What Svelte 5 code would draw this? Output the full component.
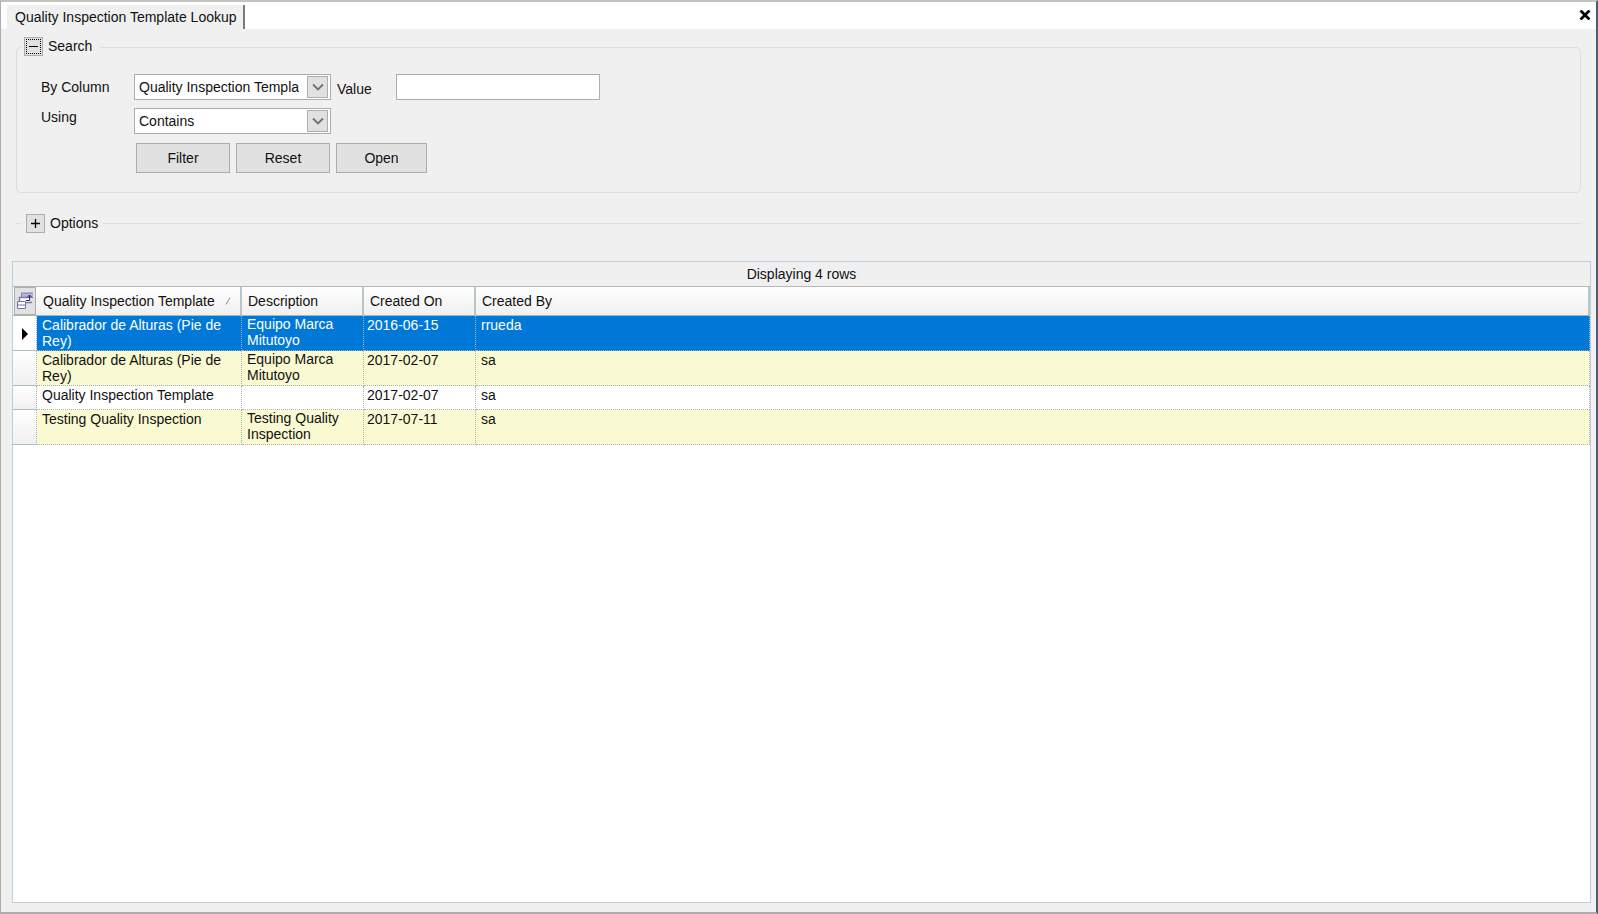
<script lang="ts">
  interface TemplateRow {
    name: string;
    description: string;
    createdOn: string;
    createdBy: string;
  }

  const rows: TemplateRow[] = [
    {
      name: "Calibrador de Alturas (Pie de Rey)",
      description: "Equipo Marca Mitutoyo",
      createdOn: "2016-06-15",
      createdBy: "rrueda",
    },
    {
      name: "Calibrador de Alturas (Pie de Rey)",
      description: "Equipo Marca Mitutoyo",
      createdOn: "2017-02-07",
      createdBy: "sa",
    },
    {
      name: "Quality Inspection Template",
      description: "",
      createdOn: "2017-02-07",
      createdBy: "sa",
    },
    {
      name: "Testing Quality Inspection",
      description: "Testing Quality Inspection",
      createdOn: "2017-07-11",
      createdBy: "sa",
    },
  ];

  let selected = $state(0);
  let searchOpen = $state(true);
  let optionsOpen = $state(false);
  let column = $state("name");
  let operator = $state("contains");
  let value = $state("");

  function reset() {
    column = "name";
    operator = "contains";
    value = "";
  }
</script>

{#snippet chevron()}
  <span class="chevron">
    <svg viewBox="0 0 12 8" width="12" height="8" fill="none" stroke="#707070" stroke-width="1.8">
      <path d="M1 1.5l5 5 5-5" />
    </svg>
  </span>
{/snippet}

<div class="window">
  <header class="tab-strip">
    <a class="tab" href="#lookup">Quality Inspection Template Lookup</a>
    <button type="button" class="close" aria-label="Close">
      <svg viewBox="0 0 12 10" width="12" height="10" stroke="#000" stroke-width="2.8">
        <path d="M1.5 0.5l9 9M10.5 0.5l-9 9" />
      </svg>
    </button>
  </header>

  <main class="content" id="lookup">
    <section class="group">
      <div class="group-title">
        <button
          type="button"
          class="toggle focused"
          aria-label="Toggle search"
          onclick={() => (searchOpen = !searchOpen)}
        >
          <svg viewBox="0 0 11 11" width="11" height="11" stroke="#000">
            <path d={searchOpen ? "M1 5.5h9" : "M1 5.5h9M5.5 1v9"} />
          </svg>
        </button>
        <span>Search</span>
      </div>

      {#if searchOpen}
        <div class="search-form">
          <label for="column">By Column</label>
          <div class="select">
            <select id="column" bind:value={column}>
              <option value="name">Quality Inspection Template</option>
              <option value="description">Description</option>
              <option value="createdOn">Created On</option>
              <option value="createdBy">Created By</option>
            </select>
            {@render chevron()}
          </div>
          <label class="value-label" for="value">Value</label>
          <input id="value" type="text" bind:value />

          <label class="using-label" for="operator">Using</label>
          <div class="select">
            <select id="operator" bind:value={operator}>
              <option value="contains">Contains</option>
              <option value="equals">Equals</option>
              <option value="starts">Starts With</option>
            </select>
            {@render chevron()}
          </div>

          <div class="actions">
            <button type="button">Filter</button>
            <button type="button" onclick={reset}>Reset</button>
            <button type="button" class="open">Open</button>
          </div>
        </div>
      {/if}
    </section>

    <section class="options">
      <button
        type="button"
        class="toggle"
        aria-label="Toggle options"
        onclick={() => (optionsOpen = !optionsOpen)}
      >
        <svg viewBox="0 0 11 11" width="11" height="11" stroke="#000" stroke-width="1.3">
          <path d={optionsOpen ? "M1 5.5h9" : "M1 5.5h9M5.5 1v9"} />
        </svg>
      </button>
      <span>Options</span>
    </section>

    <section class="grid">
      <div class="caption">Displaying {rows.length} rows</div>
      <table>
        <colgroup>
          <col class="col-selector" />
          <col class="col-name" />
          <col class="col-description" />
          <col class="col-date" />
          <col />
        </colgroup>
        <thead>
          <tr>
            <th class="chooser-cell">
              <button type="button" class="chooser" aria-label="Choose columns">
                <svg viewBox="0 0 18 20" width="18" height="20">
                  <path d="M6 2h11v5H6z" fill="#b4b4dc" />
                  <path d="M5.5 6V2H17M9 6.5h8" fill="none" stroke="#7c7cae" />
                  <path d="M4 7h9v5H4z" fill="#fff" />
                  <path d="M3.5 11V6.5h8M9 11.5h7" fill="none" stroke="#7c7cae" stroke-width="1.5" />
                  <path d="M1.5 10.5h8v7h-8zM1.5 14h8" fill="#fff" stroke="#7474a8" />
                  <path d="M10 9.5h3.5v-5M11 6.5l2.5-2.5 2.5 2.5" fill="none" stroke="#30304e" />
                </svg>
              </button>
            </th>
            <th>
              <span class="sortable">
                Quality Inspection Template
                <svg viewBox="0 0 6 8" width="6" height="8" stroke="#8a8a8a">
                  <path d="M1 7.5l4-7" />
                </svg>
              </span>
            </th>
            <th>Description</th>
            <th>Created On</th>
            <th>Created By</th>
          </tr>
        </thead>
        <tbody>
          {#each rows as row, i}
            <tr class:selected={i === selected} onclick={() => (selected = i)}>
              <td class="selector">
                {#if i === selected}
                  <svg viewBox="0 0 6 12" width="6" height="12">
                    <path d="M0 0l6 6-6 6z" />
                  </svg>
                {/if}
              </td>
              <td>{row.name}</td>
              <td class="description">{row.description}</td>
              <td class="date">{row.createdOn}</td>
              <td>{row.createdBy}</td>
            </tr>
          {/each}
        </tbody>
      </table>
    </section>
  </main>
</div>

<style>
  :global(body) {
    margin: 0;
    background: #f0f0f0;
  }

  .window {
    box-sizing: border-box;
    display: flex;
    flex-direction: column;
    min-height: 100vh;
    border: solid #adadad;
    border-width: 2px 2px 2px 1px;
    border-top-color: #c3c3bd;
    border-right-color: #4a5a80;
    background: #f0f0f0;
    color: #111;
    font: 14px/16px "Liberation Sans", Arial, sans-serif;
  }

  button,
  input,
  select {
    box-sizing: border-box;
    margin: 0;
    color: inherit;
    font: inherit;
  }

  .tab-strip {
    display: flex;
    align-items: flex-end;
    justify-content: space-between;
    height: 27px;
    padding: 0 3px 0 6px;
    background: #fff;
  }

  .tab {
    box-sizing: border-box;
    height: 24px;
    padding: 4px 6px 0 8px;
    border-right: 2px solid #7b7b7b;
    background: #f0f0f0;
    color: inherit;
    text-decoration: none;
    white-space: nowrap;
  }

  .close {
    display: flex;
    align-items: center;
    justify-content: center;
    width: 16px;
    height: 27px;
    padding: 0 0 2px;
    border: 0;
    background: none;
  }

  .content {
    display: flex;
    flex: 1;
    flex-direction: column;
    padding: 18px 5px 9px 11px;
  }

  .group {
    box-sizing: border-box;
    min-height: 146px;
    margin: 0 10px 0 4px;
    border: 1px solid #d3dfe8;
    border-radius: 5px;
  }

  .group-title {
    display: flex;
    align-items: center;
    gap: 5px;
    width: 76px;
    height: 20px;
    margin: -12px 0 0 4px;
    padding-left: 3px;
    background: #f0f0f0;
  }

  .toggle {
    display: flex;
    align-items: center;
    justify-content: center;
    width: 19px;
    height: 19px;
    padding: 0;
    border: 1px solid #adadad;
    background: #e1e1e1;
  }

  .focused svg {
    outline: 1px dotted #000;
    outline-offset: 1px;
  }

  .search-form {
    display: grid;
    grid-template-columns: 93px 197px 65px 204px;
    grid-template-rows: 26px 26px 30px;
    row-gap: 8px;
    padding: 18px 0 0 24px;
  }

  .search-form label {
    padding-top: 5px;
  }

  .search-form .value-label {
    padding: 7px 0 0 6px;
  }

  .search-form .using-label {
    padding-top: 1px;
  }

  .select {
    position: relative;
  }

  .select select {
    width: 100%;
    height: 26px;
    padding: 0 31px 0 4px;
    border: 1px solid #abadb3;
    border-radius: 0;
    background: #fff;
    appearance: none;
  }

  .chevron {
    position: absolute;
    top: 2px;
    right: 3px;
    box-sizing: border-box;
    display: flex;
    align-items: center;
    justify-content: center;
    width: 21px;
    height: 22px;
    border: 1px solid #adadad;
    background: #e1e1e1;
    pointer-events: none;
  }

  .search-form input {
    height: 26px;
    padding: 0 4px;
    border: 1px solid #abadb3;
    background: #fff;
  }

  .actions {
    display: flex;
    grid-column: 2 / -1;
    grid-row: 3;
    gap: 6px;
    padding: 1px 0 0 2px;
  }

  .actions button {
    width: 94px;
    height: 30px;
    padding: 0;
    border: 1px solid #adadad;
    background: #e1e1e1;
  }

  .actions .open {
    width: 91px;
  }

  .options {
    display: flex;
    align-items: center;
    gap: 5px;
    height: 20px;
    margin: 20px 10px 28px 4px;
  }

  .options::before,
  .options::after {
    width: 5px;
    height: 1px;
    background: #d3dfe8;
    content: "";
  }

  .options::after {
    flex: 1;
  }

  .grid {
    display: flex;
    flex: 1;
    flex-direction: column;
    border: 1px solid #bccfde;
    background: #fff;
  }

  .caption {
    height: 24px;
    border-bottom: 1px solid #b8b8b8;
    background: #f0f0f0;
    line-height: 25px;
    text-align: center;
  }

  table {
    width: 100%;
    border-collapse: separate;
    border-spacing: 0;
    table-layout: fixed;
  }

  .col-selector {
    width: 24px;
  }

  .col-name {
    width: 205px;
  }

  .col-description {
    width: 122px;
  }

  .col-date {
    width: 112px;
  }

  th {
    box-sizing: border-box;
    height: 29px;
    padding: 0 6px;
    border-right: 2px solid #b9c5c6;
    border-bottom: 1px solid #9fb8bc;
    background: linear-gradient(#fff, #f0f0f0);
    font-weight: normal;
    text-align: left;
    white-space: nowrap;
  }

  .chooser-cell {
    padding: 0 0 0 1px;
    border-right: 0;
  }

  .chooser {
    display: flex;
    align-items: center;
    justify-content: center;
    width: 22px;
    height: 28px;
    padding: 0;
    border: 1px solid #adadad;
    background: #e1e1e1;
  }

  .sortable {
    display: flex;
    align-items: center;
    gap: 10px;
  }

  td {
    box-sizing: border-box;
    height: 24px;
    padding: 1px 6px 1px 5px;
    border-right: 1px dotted #b0b0b0;
    border-bottom: 1px dotted #b0b0b0;
    vertical-align: top;
  }

  tbody tr:nth-child(even) {
    background: #fafad2;
  }

  tbody .selected {
    background: #0078d7;
    color: #fff;
  }

  td.description {
    padding-top: 0;
    padding-bottom: 2px;
  }

  td.date {
    padding-left: 3px;
  }

  td.selector {
    padding: 2px 0 0;
    border-bottom: 1px solid #a9bfc2;
    background: linear-gradient(#fff, #f0f0f0);
    vertical-align: middle;
  }

  .selected .selector {
    background: #fff;
  }

  .selector svg {
    display: block;
    margin: 0 auto;
  }
</style>
